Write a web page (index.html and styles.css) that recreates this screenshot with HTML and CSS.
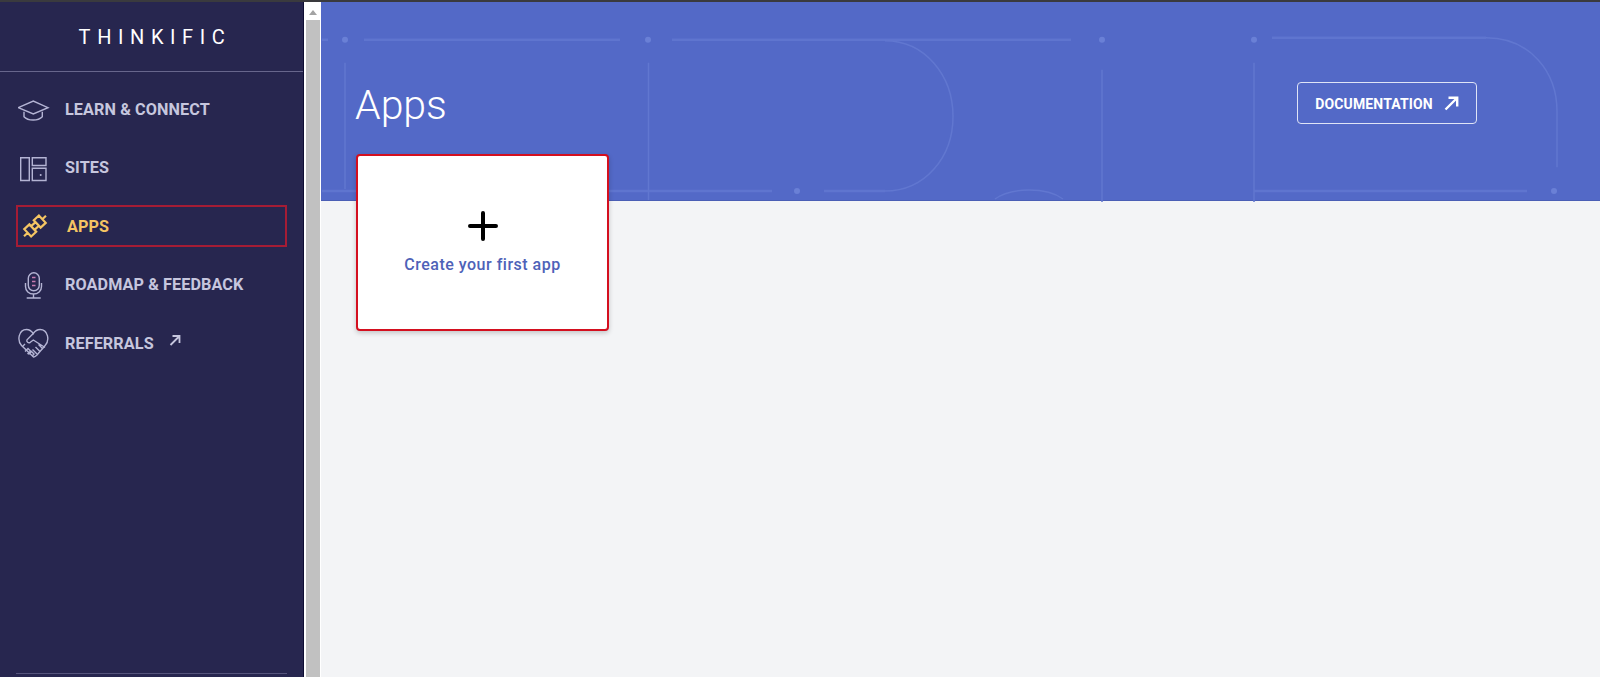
FILE: index.html
```html
<!DOCTYPE html>
<html lang="en">
<head>
<meta charset="UTF-8">
<meta name="viewport" content="width=device-width, initial-scale=1.0">
<title>Apps</title>
<link rel="stylesheet" href="styles.css">
</head>
<body>

<div class="top-line"></div>

<div class="app">
  <aside class="sidebar">
    <div class="brand"><span class="brand-name">THINKIFIC</span></div>
    <nav class="nav">
      <a class="nav-item">
        <svg class="nav-icon" viewBox="0 0 32 32"><path d="M.3 14.700 15.300 8 30 14.700 15.300 21z"/><path d="M6 18.700v5c2 2.200 5.500 3.300 9.200 3.300s7-1.100 9.100-3.300v-5"/></svg>
        <span>LEARN &amp; CONNECT</span>
      </a>
      <a class="nav-item">
        <svg class="nav-icon" viewBox="0 0 32 32"><path d="M2.700 5.800h8.600v22.700H2.700z"/><path d="M14.300 5.800H28v7.700H14.300z"/><path d="M14.300 16.200H28v12.300H14.300z"/><circle class="icon-fill" cx="22.700" cy="23" r="1"/></svg>
        <span>SITES</span>
      </a>
      <a class="nav-item nav-item-active">
        <svg class="nav-icon nav-icon-bold" viewBox="0 0 32 32"><g transform="rotate(-43 17 16)"><path d="M2 16h5M27 16h5M7 11h7v10H7zM20 11h7v10h-7zM14 13.500h6M14 18.500h6"/></g></svg>
        <span>APPS</span>
      </a>
      <a class="nav-item">
        <svg class="nav-icon" viewBox="0 0 32 32"><rect x="10.300" y="3.800" width="11" height="18" rx="5.500"/><path d="M7.500 14v3.500c0 4.500 3.500 7.500 8 7.500s8-3 8-7.500V14M15.500 25v3.500M8.700 29h14"/><path class="icon-accent" d="M14 8.500h3.500M14 12.500h3.500M14 16.500h3.500"/></svg>
        <span>ROADMAP &amp; FEEDBACK</span>
      </a>
      <a class="nav-item">
        <svg class="nav-icon" viewBox="0 0 32 32"><path d="M15.300 29.800 3.500 18.500C-1 13.500 .5 2.500 8.500 2.500c3 0 5 1.500 6.800 4 1.700-2.500 3.800-4 6.800-4 8 0 9.800 11 5 16L19 28c-1.300 1.300-2.500 2.400-3.700 1.800z"/><path d="M15.300 6.500 9 12.800c-1 2 1.500 3.700 3.300 2.500l3-2.300L27 20.500M4.500 19.500 7 17M7 24.500l3-3 2.500 2.500-3 3M10.500 27.500l3-3 2.500 2.500-2 2.300M19 27l-4.500-4.500M22 24.500 17.500 20M25 22l-4.500-4.500"/></svg>
        <span>REFERRALS</span>
        <svg class="nav-ext" viewBox="0 0 12 12"><path d="M1.500 11 10 2.500M3.500 2H10.500V9"/></svg>
      </a>
    </nav>
    <div class="sidebar-foot"></div>
  </aside>

  <div class="scrollbar">
    <div class="scroll-btn"><span class="scroll-arrow"></span></div>
    <div class="scroll-thumb"></div>
  </div>

  <main class="main">
    <header class="hero">
      <svg class="hero-lines" viewBox="0 0 1279 199" preserveAspectRatio="none">
        <g class="line-thick">
          <path d="M1 38H7M43 38H299M351 38H750"/>
          <path d="M951 36H1165"/>
          <path d="M1 190H451M503 190H564M933 190H1206"/>
        </g>
        <g class="line-thin">
          <path d="M1165 36C1209 36 1236 70 1236 110V166"/>
          <path d="M564 39C604 39 632 74 632 115C632 156 604 190 564 190"/>
          <path d="M24 61V188M327.500 61V199M781 68V201M933 61V201"/>
          <path d="M674 198C690 186 726 186 742 198"/>
        </g>
        <g class="line-dots">
          <circle cx="24" cy="38" r="3"/><circle cx="327" cy="38" r="3"/><circle cx="781" cy="38" r="3"/>
          <circle cx="933" cy="38" r="3"/><circle cx="476" cy="190" r="3"/><circle cx="1233" cy="190" r="3"/>
        </g>
      </svg>
      <div class="hero-row">
        <h1 class="hero-title">Apps</h1>
        <a class="doc-btn"><span class="doc-label">DOCUMENTATION</span>
          <svg class="doc-arrow" viewBox="0 0 15 15"><path d="M1.500 13.500 13 2M4.500 1.800H13.200V10.500"/></svg>
        </a>
      </div>
    </header>
    <section class="content">
      <div class="create-card">
        <svg class="create-plus" viewBox="0 0 30 30"><path d="M15 2V28M2 15H28"/></svg>
        <span class="create-text">Create your first app</span>
      </div>
    </section>
  </main>
</div>

</body>
</html>
```

FILE: styles.css
```css
* {
  box-sizing: border-box;
}
html, body {
  margin: 0;
  height: 100%;
  overflow: hidden;
}
body {
  display: flex;
  flex-direction: column;
  font-family: "Roboto", "Liberation Sans", sans-serif;
  background: #f3f4f6;
}
.top-line {
  height: 2px;
  background: #3a3a3e;
  flex: none;
}
.app {
  display: flex;
  flex: 1;
  min-height: 0;
}

/* sidebar */
.sidebar {
  width: 304px;
  flex: none;
  display: flex;
  flex-direction: column;
  background: #27264f;
  border-right: 1px solid #0e0d33;
}
.brand {
  height: 70px;
  flex: none;
  display: flex;
  align-items: center;
  justify-content: center;
  border-bottom: 1px solid #67668c;
}
.brand-name {
  color: #fff;
  font-size: 20px;
  font-weight: 400;
  letter-spacing: 6.600px;
  margin-left: 7px;
}
.nav {
  flex: 1;
  display: flex;
  flex-direction: column;
  gap: 16.5px;
  padding: 16px 16px 0;
}
.nav-item {
  height: 42px;
  flex: none;
  display: flex;
  align-items: center;
  gap: 15px;
  padding-left: 2px;
  color: #c6c6de;
  font-size: 16.2px;
  font-weight: 700;
  letter-spacing: 0.1px;
}
.nav-item-active {
  color: #f5c563;
  padding-left: 0;
  gap: 17px;
  border: 2px solid #a51c35;
}
.nav-icon {
  width: 32px;
  height: 32px;
  fill: none;
  stroke: #b4b4d4;
  stroke-width: 1.400;
  flex: none;
}
.nav-icon-bold {
  stroke: #f5c563;
  stroke-width: 2.200;
}
.icon-fill {
  fill: #b4b4d4;
  stroke: none;
}
.icon-accent {
  stroke: #c77bb0;
}
.nav-ext {
  width: 12px;
  height: 12px;
  margin: -6px 0 0 0;
  fill: none;
  stroke: currentColor;
  stroke-width: 1.800;
}
.sidebar-foot {
  height: 1px;
  margin: 0 16px 3px;
  background: #55547c;
}

/* scrollbar */
.scrollbar {
  width: 17px;
  flex: none;
  display: flex;
  flex-direction: column;
  background: #fff;
  padding: 0 1.5px 0 2px;
}
.scroll-btn {
  height: 18px;
  padding-top: 2px;
  display: flex;
  align-items: center;
  justify-content: center;
}
.scroll-arrow {
  width: 0;
  height: 0;
  border-left: 4px solid transparent;
  border-right: 4px solid transparent;
  border-bottom: 5px solid #a3a3a3;
}
.scroll-thumb {
  flex: 1;
  background: #c1c1c1;
}

/* main */
.main {
  flex: 1;
  min-width: 0;
  display: flex;
  flex-direction: column;
}
.hero {
  position: relative;
  height: 199px;
  flex: none;
  background: #5369c7;
  border-bottom: 1px solid #4a5eb5;
}
.hero-lines {
  position: absolute;
  top: 0;
  left: 0;
  width: 100%;
  height: 100%;
  overflow: visible;
}
.line-thick {
  fill: none;
  stroke: #5f75cf;
  stroke-width: 2.500;
}
.line-thin {
  fill: none;
  stroke: #6177d0;
  stroke-width: 1.500;
}
.line-dots {
  fill: #6a80d6;
}
.hero-row {
  position: relative;
  display: flex;
  align-items: flex-start;
  justify-content: space-between;
  padding: 80px 123px 0 35px;
}
.hero-title {
  margin: 1px 0 0 -1px;
  color: #fff;
  font-size: 41px;
  font-weight: 300;
  line-height: 44px;
}
.doc-btn {
  width: 180px;
  height: 42px;
  display: flex;
  align-items: center;
  justify-content: center;
  gap: 11px;
  color: #fff;
  font-size: 14px;
  font-weight: 700;
  letter-spacing: 0.15px;
  border: 1px solid #dfe4f6;
  border-radius: 4px;
}
.doc-label {
  padding-top: 1px;
}
.doc-arrow {
  width: 15px;
  height: 15px;
  fill: none;
  stroke: #fff;
  stroke-width: 2.400;
}

/* content */
.content {
  position: relative;
  flex: 1;
  padding: 0 35px;
}
.create-card {
  width: 253px;
  height: 177px;
  margin-top: -47px;
  position: relative;
  display: flex;
  flex-direction: column;
  align-items: center;
  gap: 14px;
  padding-top: 55px;
  background: #fff;
  border: 2px solid #d40f1f;
  border-radius: 4px;
  box-shadow: 0 2px 5px rgba(0, 0, 0, 0.2);
}
.create-plus {
  width: 30px;
  height: 30px;
  fill: none;
  stroke: #000;
  stroke-width: 4;
  stroke-linecap: round;
}
.create-text {
  color: #4e62b8;
  font-size: 16px;
  font-weight: 500;
  letter-spacing: 0.5px;
}
```
